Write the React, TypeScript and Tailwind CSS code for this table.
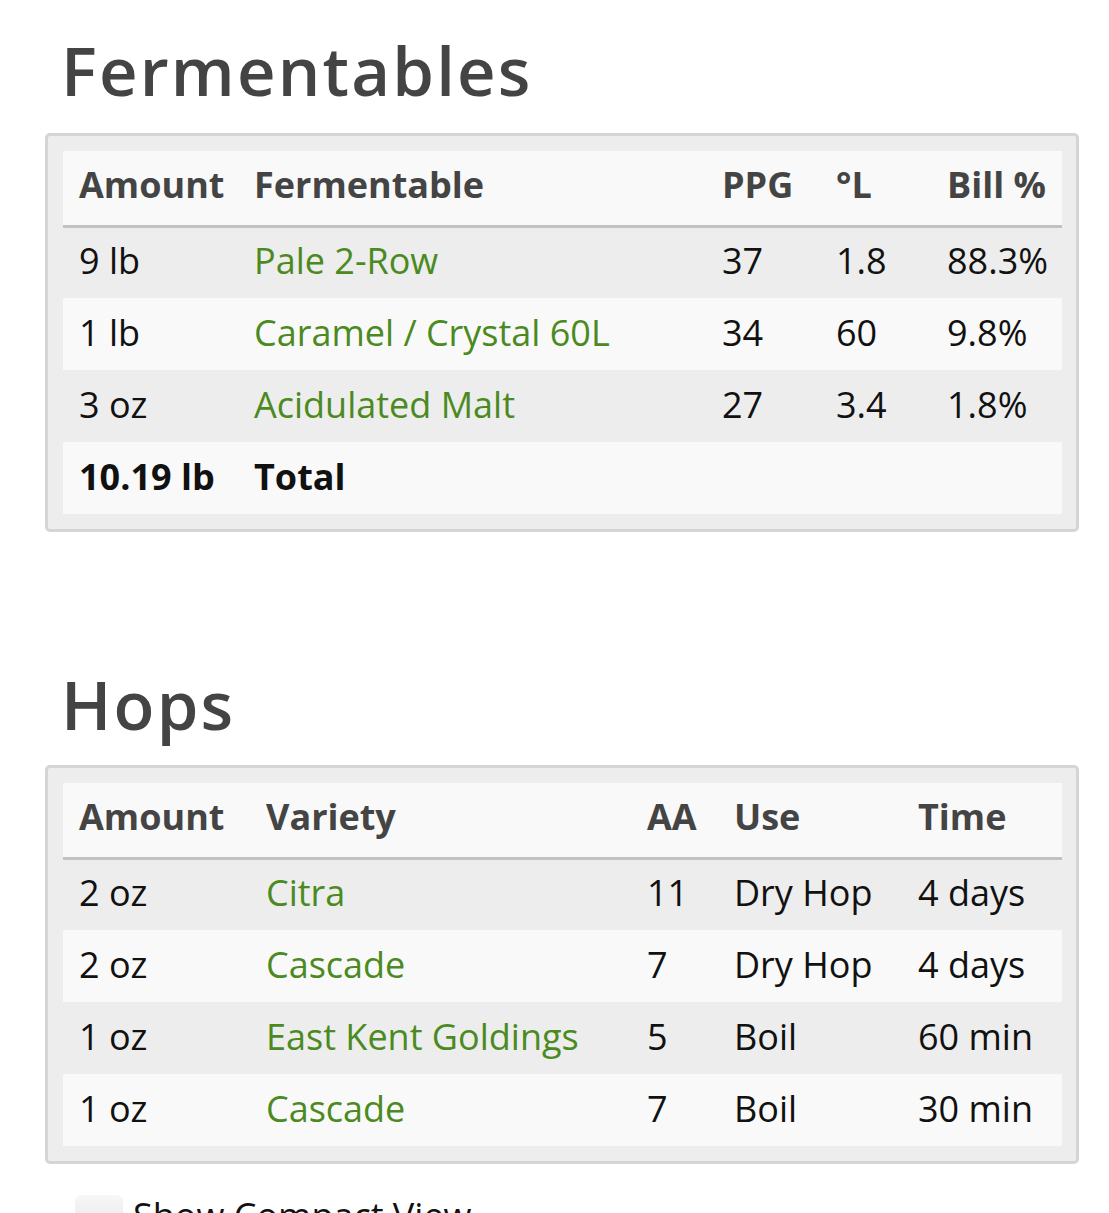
import React from "react";

type Cell = { text: string; link?: boolean; bold?: boolean };

function DataTable({
  widths,
  headers,
  rows,
}: {
  widths: string[];
  headers: string[];
  rows: Cell[][];
}) {
  return (
    <div className="rounded-[5px] border-[3px] border-[#d5d5d5] bg-[#ededed] p-[15px]">
      <table className="w-full table-fixed border-collapse">
        <colgroup>
          {widths.map((w, i) => (
            <col key={i} className={w} />
          ))}
        </colgroup>
        <thead>
          <tr className="h-[75px] border-b-[3px] border-[#c2c2c2] bg-[#f9f9f9]">
            {headers.map((h, i) => (
              <th
                key={i}
                className="whitespace-nowrap px-[16px] pb-[5px] text-left align-middle text-[36px] font-bold text-[#444444]"
              >
                {h}
              </th>
            ))}
          </tr>
        </thead>
        <tbody>
          {rows.map((r, ri) => (
            <tr key={ri} className={ri % 2 === 1 ? "h-[72px] bg-[#f9f9f9]" : "h-[72px]"}>
              {r.map((c, ci) => (
                <td
                  key={ci}
                  className={
                    "whitespace-nowrap px-[16px] pb-[3px] align-middle text-[36px] " +
                    (c.link
                      ? "text-[#4b8a21]"
                      : c.bold
                      ? "font-bold text-[#111111]"
                      : "text-[#111111]")
                  }
                >
                  {c.text}
                </td>
              ))}
            </tr>
          ))}
        </tbody>
      </table>
    </div>
  );
}

export default function App() {
  const ferm: Cell[][] = [
    [{ text: "9 lb" }, { text: "Pale 2-Row", link: true }, { text: "37" }, { text: "1.8" }, { text: "88.3%" }],
    [{ text: "1 lb" }, { text: "Caramel / Crystal 60L", link: true }, { text: "34" }, { text: "60" }, { text: "9.8%" }],
    [{ text: "3 oz" }, { text: "Acidulated Malt", link: true }, { text: "27" }, { text: "3.4" }, { text: "1.8%" }],
    [{ text: "10.19 lb", bold: true }, { text: "Total", bold: true }, { text: "" }, { text: "" }, { text: "" }],
  ];
  const hops: Cell[][] = [
    [{ text: "2 oz" }, { text: "Citra", link: true }, { text: "11" }, { text: "Dry Hop" }, { text: "4 days" }],
    [{ text: "2 oz" }, { text: "Cascade", link: true }, { text: "7" }, { text: "Dry Hop" }, { text: "4 days" }],
    [{ text: "1 oz" }, { text: "East Kent Goldings", link: true }, { text: "5" }, { text: "Boil" }, { text: "60 min" }],
    [{ text: "1 oz" }, { text: "Cascade", link: true }, { text: "7" }, { text: "Boil" }, { text: "30 min" }],
  ];
  return (
    <div
      className="min-h-[1213px] overflow-hidden bg-white pl-[45px] pr-[30px]"
      style={{ fontFamily: '"Open Sans", "Noto Sans", sans-serif' }}
    >
      <h2 className="mt-[37px] mb-[29px] pl-[16px] text-[67px] font-semibold leading-none tracking-[2.2px] text-[#444444]">
        Fermentables
      </h2>
      <DataTable
        widths={["w-[175px]", "w-[468px]", "w-[114px]", "w-[111px]", "w-[131px]"]}
        headers={["Amount", "Fermentable", "PPG", "°L", "Bill %"]}
        rows={ferm}
      />
      <h2 className="mt-[139px] mb-[27px] pl-[16px] text-[67px] font-semibold leading-none tracking-[2.2px] text-[#444444]">
        Hops
      </h2>
      <DataTable
        widths={["w-[187px]", "w-[381px]", "w-[87px]", "w-[184px]", "w-[160px]"]}
        headers={["Amount", "Variety", "AA", "Use", "Time"]}
        rows={hops}
      />
      <label className="mt-[28px] flex items-start gap-[10px] pl-[30px]">
        <span className="mt-[3px] block h-[48px] w-[48px] shrink-0 rounded-[6px] bg-gradient-to-b from-[#f7f7f7] to-[#e2e2e2]" />
        <span className="text-[36px] leading-[48px] text-[#111111]">Show Compact View</span>
      </label>
    </div>
  );
}
